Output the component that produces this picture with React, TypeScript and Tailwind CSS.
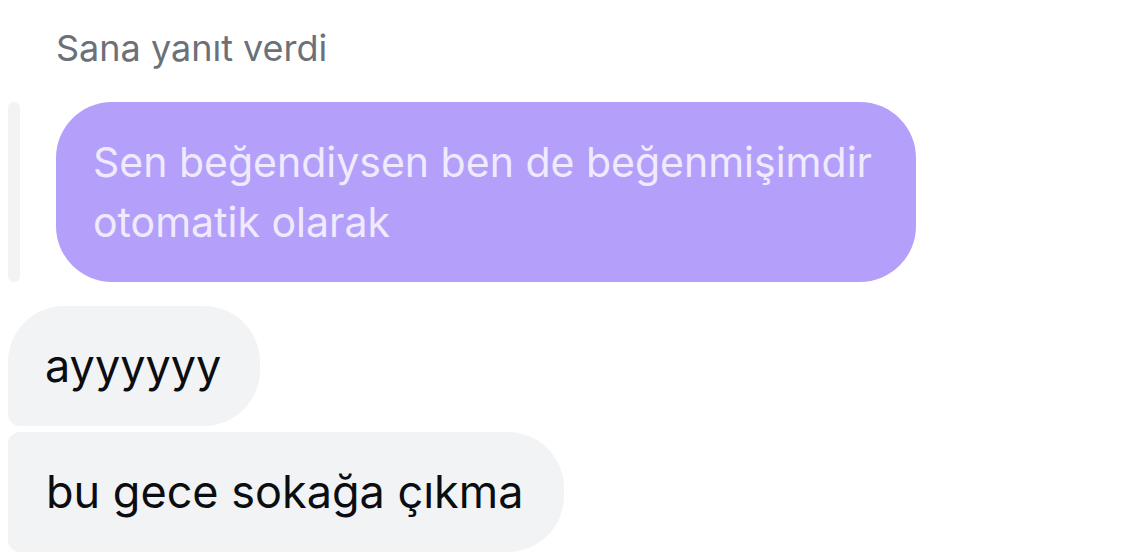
export default function App() {
  return (
    <div className="w-[1124px] h-[557px] overflow-hidden bg-white font-['Inter','Noto_Sans',sans-serif]">
      {/* reply header */}
      <div className="pl-[56px] pt-[24px] h-[102px]">
        <p className="text-[36px] leading-[48px] text-[#6b7079]">Sana yanıt verdi</p>
      </div>

      {/* quoted message */}
      <div className="flex gap-[36px] pl-[8px]">
        <div className="w-[12px] rounded-full bg-[#f2f3f5]" />
        <div className="w-[860px] rounded-[56px] bg-[#b4a0fa] px-[37px] py-[30px]">
          <p className="text-[41px] leading-[60px] text-[#efeafd]">
            Sen beğendiysen ben de beğenmişimdir otomatik olarak
          </p>
        </div>
      </div>

      {/* received messages */}
      <div className="flex flex-col items-start gap-[6px] pl-[8px] pt-[24px]">
        <div className="rounded-[56px] rounded-bl-[12px] bg-[#f2f3f5] pl-[37px] pr-[39px] py-[30px]">
          <p className="text-[45px] leading-[60px] text-[#0b0d10]">ayyyyyy</p>
        </div>
        <div className="rounded-[56px] rounded-tl-[12px] rounded-bl-[12px] bg-[#f2f3f5] pl-[38px] pr-[41px] py-[30px]">
          <p className="text-[45px] leading-[60px] text-[#0b0d10]">bu gece sokağa çıkma</p>
        </div>
      </div>
    </div>
  );
}
